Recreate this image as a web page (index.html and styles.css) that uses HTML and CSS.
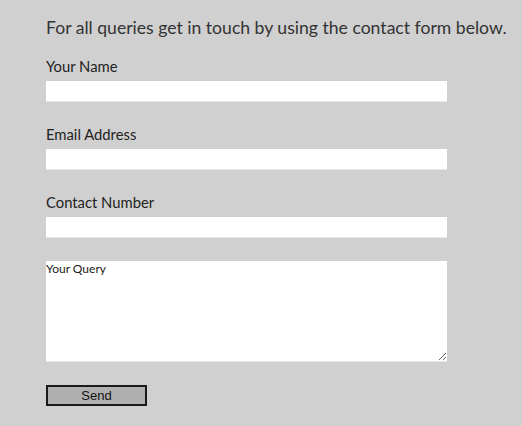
FILE: index.html
```html
<!DOCTYPE html>
<html>
<head>
<meta charset="utf-8">
<link rel="stylesheet" href="styles.css">
</head>
<body>
<div class="page">
  <p class="intro">For all queries get in touch by using the contact form below.</p>
  <form class="form">
    <label class="field">
      <span class="label">Your Name</span>
      <input class="input" type="text">
    </label>
    <label class="field">
      <span class="label">Email Address</span>
      <input class="input" type="text">
    </label>
    <label class="field">
      <span class="label">Contact Number</span>
      <input class="input" type="text">
    </label>
    <textarea class="query" placeholder="Your Query"></textarea>
    <button class="send" type="button">Send</button>
  </form>
</div>
</body>
</html>
```
FILE: styles.css
```css
html, body {
  margin: 0;
  padding: 0;
  background: #d0d0d0;
}
.page {
  padding: 16px 0 0 46px;
  font-family: "Lato", "Noto Sans", sans-serif;
  color: #2a2a2a;
}
.intro {
  margin: 0;
  font-size: 17.6px;
  line-height: 24px;
  color: #333;
}
.form {
  display: flex;
  flex-direction: column;
  align-items: flex-start;
  margin-top: 17px;
}
.field {
  display: flex;
  flex-direction: column;
  margin-bottom: 23px;
}
.label {
  font-size: 14.8px;
  line-height: 19px;
  margin-bottom: 5px;
  color: #222;
}
.input {
  box-sizing: border-box;
  width: 401px;
  height: 21px;
  margin: 0;
  border: none;
  border-bottom: 1px solid #e6e6e6;
  background: #fff;
  outline: none;
}
.query {
  box-sizing: border-box;
  width: 401px;
  height: 101px;
  margin: 0;
  padding: 1px 0 0 0;
  border: none;
  border-bottom: 1px solid #e6e6e6;
  background: #fff;
  font-family: "Lato", "Noto Sans", sans-serif;
  font-size: 12px;
  line-height: 14px;
  outline: none;
}
.query::placeholder {
  color: #222;
  opacity: 1;
}
.send {
  box-sizing: border-box;
  width: 101px;
  height: 21px;
  margin-top: 23px;
  padding: 0;
  border: 2px solid #1a1a1a;
  background: #b0b0b0;
  font-family: "Liberation Sans", Arial, sans-serif;
  font-size: 13px;
  color: #111;
}
```
